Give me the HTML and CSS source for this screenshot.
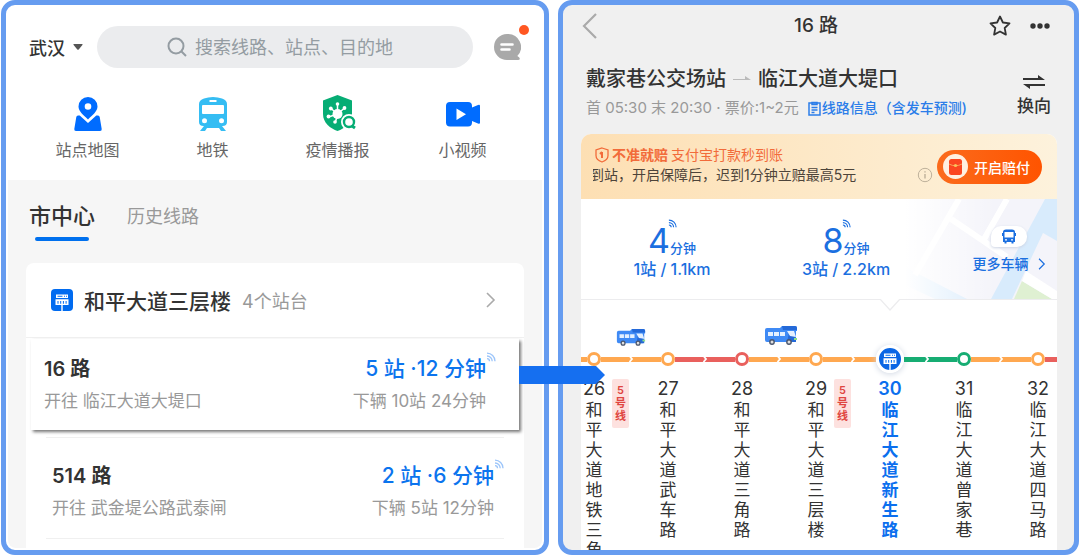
FILE: index.html
```html
<!DOCTYPE html>
<html lang="zh-CN">
  <head>
    <meta charset="UTF-8" />
    <meta name="viewport" content="width=device-width, initial-scale=1.0" />
    <title>16 路</title>
    <link rel="stylesheet" href="styles.css">
  </head>
  <body>
    <svg width="0" height="0" class="defs">
      <symbol id="signal" viewBox="0 0 10 10">
        <g fill="none" stroke="currentColor" stroke-width="1.3">
          <path d="M1 1.2a8 8 0 0 1 8 8M1 4a5.2 5.2 0 0 1 5.2 5.2M1 6.7a2.5 2.5 0 0 1 2.5 2.5" />
        </g>
      </symbol>
      <symbol id="bus" viewBox="0 0 34 20">
        <path fill="#3f8af5" d="M1 5q0-2 2-2h13l2-2h13q2 0 2 2v3h-1v9q0 2-2 2H3q-2 0-2-2z" />
        <path fill="#2469d8" d="M18 1h13q2 0 2 2v2H19zM25 8l7 5v4h-9z" />
        <path fill="#e4f0ff" d="M4 7h5v4H4zM10 7h5v4h-5zM16 7h5v4h-5zM23 6h7l2 6-6-1z" />
        <path fill="#8ee08a" d="M30 13h3v2h-3z" />
        <circle cx="8" cy="17" r="2.2" fill="#ddd" stroke="#4b566c" stroke-width="1.4" />
        <circle cx="25" cy="17" r="2.2" fill="#ddd" stroke="#4b566c" stroke-width="1.4" />
      </symbol>
      <symbol id="sign" viewBox="0 0 22 22">
        <path fill="#fff" d="M5 5.5h12v3.500H5zM4.500 10.200h13V16h-5.800v6h-1.400v-6H4.500z" />
        <path fill="#006bf0" d="M6.500 6.700h5v1h-5zM13 6.700h1v1h-1zM15 6.700h1v1h-1zM6.500 12h1v2.800h-1zM9.200 12h1v2.800h-1zM11.900 12h1v2.800h-1zM14.600 12h1v2.800h-1z" />
      </symbol>
      <symbol id="chevron" viewBox="0 0 10 16">
        <path d="M1 1l7 7-7 7" fill="none" stroke="currentColor" stroke-width="1.6" />
      </symbol>
      <symbol id="next" viewBox="0 0 6 8">
        <path d="M1.5 1L4 4 1.5 7" fill="none" stroke="#fff" stroke-width="1.8" />
      </symbol>
    </svg>

    <main class="screens">
      <!-- home -->
      <section class="screen home">
        <div class="home_top">
          <div class="search_bar">
            <button class="city">武汉
              <svg width="10" height="6" viewBox="0 0 10 6"><path fill="#555" d="M1 0h8q1 0 .4.9L5.700 5.400q-.7.7-1.400 0L.6.900Q0 0 1 0z" /></svg>
            </button>
            <label class="search">
              <svg width="20" height="20" viewBox="0 0 20 20" fill="none" stroke="#949ca2" stroke-width="2"><circle cx="9" cy="9" r="7.5" /><path d="M14 14l5 5" /></svg>
              <input type="text" aria-label="搜索" placeholder="搜索线路、站点、目的地" />
            </label>
            <button class="chat" aria-label="消息">
              <svg width="28" height="28" viewBox="0 0 28 28">
                <path fill="#a9a9a9" d="M14 1a13 13 0 1 0 0 26h11q2 0 1.800-1.500t-2.500-2.500A13 13 0 0 0 14 1z" />
                <path d="M8.500 11.500h11M8.500 16.500h8" stroke="#fff" stroke-width="2.600" stroke-linecap="round" />
              </svg>
              <span class="dot"></span>
            </button>
          </div>
          <nav class="shortcuts">
            <a href="#" class="shortcut">
              <svg width="36" height="38" viewBox="0 0 36 38">
                <path fill="#006cff" d="M18 2a9.500 9.500 0 0 0-9.500 9.500c0 5 5 8.500 9.500 13 4.500-4.500 9.500-8 9.500-13A9.500 9.500 0 0 0 18 2zm0 6.200a3.300 3.300 0 1 1 0 6.600 3.300 3.300 0 0 1 0-6.600z" />
                <path fill="#006cff" d="M8 20.500h1.700L18 28l8.300-7.500H28q1.400 0 1.700 1.500l2 12q.3 2-1.700 2H6q-2 0-1.700-2l2-12q.3-1.500 1.700-1.500z" />
              </svg>
              站点地图
            </a>
            <a href="#" class="shortcut">
              <svg width="36" height="38" viewBox="0 0 36 38">
                <path fill="#35bdf3" fill-rule="evenodd" d="M4 9q0-4 5-5.500Q13 2 18 2t9 1.500Q32 5 32 9v18q0 4-4.500 4H27l4 5h-5l-2-3H12l-2 3H5l4-5h-.5Q4 31 4 27zm4 1q-1 0-1 1v7q0 1 1 1h20q1 0 1-1v-7q0-1-1-1zm6.500-5v2h7V5zM9.500 23.300a2.500 2.500 0 1 0 0 5 2.500 2.500 0 0 0 0-5zm17 0a2.500 2.500 0 1 0 0 5 2.500 2.500 0 0 0 0-5z" />
              </svg>
              地铁
            </a>
            <a href="#" class="shortcut">
              <svg width="36" height="38" viewBox="0 0 36 38">
                <path fill="#06ad74" d="M17.500 0L32 5.500V19c0 9-7.500 14.500-14.500 17C10.500 33.500 3 28 3 19V5.500z" />
                <g stroke="#fff" stroke-width="1.500"><path d="M17.500 19V9M17.500 19l7-6M17.500 19l-7-6M17.500 19l-9 3M17.500 19l-2 8" /></g>
                <g fill="#fff"><circle cx="17.500" cy="19" r="5" /><circle cx="17.500" cy="9" r="1.800" /><circle cx="24.500" cy="13" r="1.900" /><circle cx="10.800" cy="13.500" r="1.900" /><circle cx="8.500" cy="21.500" r="1.900" /><circle cx="15" cy="27" r="1.800" /><circle cx="29" cy="27" r="8" /></g>
                <circle cx="29" cy="27" r="5" fill="#fff" stroke="#06ad74" stroke-width="2.400" />
                <path d="M32 31l3 2" stroke="#06ad74" stroke-width="3" />
              </svg>
              疫情播报
            </a>
            <a href="#" class="shortcut">
              <svg width="36" height="38" viewBox="0 0 36 38">
                <path fill="#006cff" fill-rule="evenodd" d="M5 7h18q4 0 4 4v1.500l6-2.500q2-.8 2 1v16.500q0 2-2 1L27 26v1.500q0 4-4 4H5q-4 0-4-4V11q0-4 4-4zm6.500 6.500v11.500l9.500-5.700z" />
              </svg>
              小视频
            </a>
          </nav>
        </div>

        <div class="home_body">
          <div class="tabs">
            <button class="tab _active">市中心</button>
            <button class="tab">历史线路</button>
          </div>
          <div class="card">
            <a href="#" class="station">
              <svg width="22" height="22" viewBox="0 0 22 22"><rect width="22" height="22" rx="4" fill="#006bf0" /><use href="#sign" /></svg>
              <span class="station_name">和平大道三层楼</span>
              <span class="station_count">4个站台</span>
              <svg class="station_more" width="10" height="16"><use href="#chevron" /></svg>
            </a>
            <a href="#" class="line _picked">
              <span class="line_row">
                <span class="line_name">16 路</span>
                <span class="line_time">5 站 ·12 分钟<svg class="signal" width="10" height="10"><use href="#signal" /></svg></span>
              </span>
              <span class="line_row line_sub">
                <span>开往 临江大道大堤口</span>
                <span>下辆 10站 24分钟</span>
              </span>
              <svg class="arrow" width="86" height="18" viewBox="0 0 86 18"><path fill="#156ff0" d="M0 0h77l9 9-9 9H0z" /></svg>
            </a>
            <a href="#" class="line">
              <span class="line_row">
                <span class="line_name">514 路</span>
                <span class="line_time">2 站 ·6 分钟<svg class="signal" width="10" height="10"><use href="#signal" /></svg></span>
              </span>
              <span class="line_row line_sub">
                <span>开往 武金堤公路武泰闸</span>
                <span>下辆 5站 12分钟</span>
              </span>
            </a>
          </div>
        </div>
      </section>

      <!-- line details -->
      <section class="screen detail">
        <header class="bar">
          <button class="back" aria-label="返回"><svg width="16" height="26" viewBox="0 0 16 26"><path d="M14 1L2 13l12 12" fill="none" stroke="#aaa" stroke-width="2.200" /></svg></button>
          <h1 class="bar_title">16 路</h1>
          <div class="bar_actions">
            <button aria-label="收藏"><svg width="22" height="22" viewBox="0 0 22 22"><path d="M11 1.500l2.900 6 6.600.9-4.800 4.600 1.200 6.600L11 16.500l-5.900 3.100L6.300 13 1.500 8.400l6.600-.9z" fill="none" stroke="#333" stroke-width="1.800" stroke-linejoin="round" /></svg></button>
            <button aria-label="更多"><svg width="20" height="6" viewBox="0 0 20 6" fill="#333"><circle cx="3" cy="3" r="2.700" /><circle cx="10" cy="3" r="2.700" /><circle cx="17" cy="3" r="2.700" /></svg></button>
          </div>
        </header>

        <div class="route">
          <div>
            <h2 class="route_name">戴家巷公交场站
              <svg width="18" height="6" viewBox="0 0 18 6"><path d="M0 4h18l-6-4v3H0z" fill="#bbb" /></svg>
              临江大道大堤口</h2>
            <div class="route_info">
              <span class="route_hours">首 05:30 末 20:30 · 票价:1~2元</span>
              <a href="#" class="route_link">
                <svg width="13" height="15" viewBox="0 0 13 15" fill="none" stroke="#2b7de9" stroke-width="1.500"><path d="M1 2h11v12H1zM3.500 6.500h6M3.500 9h6M3.500 11.500h3" /><path d="M4 1.500h5v2H4z" /></svg>线路信息（含发车预测)
              </a>
            </div>
          </div>
          <button class="swap">
            <svg width="22" height="14" viewBox="0 0 22 14" fill="#333"><path d="M0 3h15V0l7 5H0zM22 11H7v3L0 9h22z" /></svg>
            换向
          </button>
        </div>

        <div class="panel">
          <div class="banner">
            <div class="banner_text">
              <p class="banner_title">
                <svg width="14" height="16" viewBox="0 0 14 16" fill="none" stroke="#f26b3a" stroke-width="1.300"><path d="M7 1l6 2v5.500c0 3.500-3 5.500-6 6.500-3-1-6-3-6-6.500V3z" /><path d="M7 5v6M5 7l2-2" stroke-width="2" /></svg>
                <b>不准就赔</b> <span>支付宝打款秒到账</span>
              </p>
              <p class="banner_note">到站，开启保障后，迟到1分钟立赔最高5元</p>
            </div>
            <svg class="banner_hint" width="16" height="16" viewBox="0 0 16 16" fill="none" stroke="#bdb09a"><circle cx="8" cy="8" r="6.700" /><path d="M8 7v4.500M8 4.200v1.400" stroke-width="1.400" /></svg>
            <button class="pay">
              <svg width="25" height="25" viewBox="0 0 25 25"><circle cx="12.500" cy="12.500" r="12.500" fill="#fff0e0" /><rect x="6" y="5" width="13" height="16" rx="2.500" fill="#fb4620" /><path d="M6 10q6.500 3.500 13 0" fill="none" stroke="#f8a35a" /><circle cx="12.500" cy="11.500" r="1.600" fill="#f8c35a" /></svg>
              开启赔付
            </button>
          </div>

          <div class="arrivals">
            <div class="arrival">
              <div class="arrival_time">4<span>分钟</span><svg class="signal" width="9" height="9"><use href="#signal" /></svg></div>
              <div class="arrival_far">1站 / 1.1km</div>
            </div>
            <div class="arrival">
              <div class="arrival_time">8<span>分钟</span><svg class="signal" width="9" height="9"><use href="#signal" /></svg></div>
              <div class="arrival_far">3站 / 2.2km</div>
            </div>
            <a href="#" class="more">
              <svg class="map" viewBox="0 0 152 100" preserveAspectRatio="none">
                <defs>
                  <linearGradient id="fade"><stop offset="0" stop-color="#fff" /><stop offset=".6" stop-color="#fff" stop-opacity="0" /></linearGradient>
                </defs>
                <path fill="#f4f4fa" d="M0 0h152v100H0z" />
                <path fill="#d8ebfc" d="M0 68l62 32H30L0 86z" />
                <path d="M54 0L10 76M46 20l56 38M102 0L78 42" fill="none" stroke="#fff" stroke-width="6" />
                <path fill="#d8ebfc" d="M140 0h12v42l-14-8-31 66H86z" />
                <path fill="#dff0d2" d="M117 82l30 18h-38z" />
                <path fill="#fff" d="M121 72l31 20v8h-5l-30-18z" />
                <path fill="url(#fade)" d="M0 0h152v100H0z" />
              </svg>
              <span class="more_bubble">
                <svg width="14" height="15" viewBox="0 0 14 15"><path fill="#1b6fe0" fill-rule="evenodd" d="M1 3q0-2.500 3-2.500h6q3 0 3 2.500v10h-1.500v1.500H9.500V13h-5v1.500h-2V13H1zM0 4h1v3H0zM13 4h1v3h-1zM2.500 3v5.500h9V3zM3 10.200v1.200h2v-1.200zm6 0v1.200h2v-1.200z" /></svg>
              </span>
              <span class="more_text">更多车辆 <svg width="8" height="12" viewBox="0 0 10 16"><use href="#chevron" /></svg></span>
            </a>
            <svg class="notch" width="20" height="12" viewBox="0 0 20 12"><path d="M0 0l10 11L20 0" fill="#fff" stroke="#ececee" stroke-width="1.300" /></svg>
          </div>

          <ol class="stops">
            <li class="stop">
              <div class="track"><i class="seg _orange"></i><i class="node _orange"></i><i class="seg _orange"></i><svg class="next" width="6" height="8"><use href="#next" /></svg></div>
              <svg class="bus" width="30" height="18"><use href="#bus" /></svg>
              <div class="stop_num">26</div>
              <div class="stop_name">和平大道地铁三角路</div>
              <span class="tag">5号线</span>
            </li>
            <li class="stop">
              <div class="track"><i class="seg _orange"></i><i class="node _orange"></i><i class="seg _red"></i><svg class="next" width="6" height="8"><use href="#next" /></svg></div>
              <div class="stop_num">27</div>
              <div class="stop_name">和平大道武车路</div>
            </li>
            <li class="stop">
              <div class="track"><i class="seg _red"></i><i class="node _red"></i><i class="seg _orange"></i><svg class="next" width="6" height="8"><use href="#next" /></svg></div>
              <svg class="bus _near" width="34" height="20"><use href="#bus" /></svg>
              <div class="stop_num">28</div>
              <div class="stop_name">和平大道三角路</div>
            </li>
            <li class="stop">
              <div class="track"><i class="seg _orange"></i><i class="node _orange"></i><i class="seg _orange"></i><svg class="next" width="6" height="8"><use href="#next" /></svg></div>
              <div class="stop_num">29</div>
              <div class="stop_name">和平大道三层楼</div>
              <span class="tag">5号线</span>
            </li>
            <li class="stop _current">
              <div class="track"><i class="seg _orange"></i><svg class="here" width="28" height="28" viewBox="0 0 28 28"><circle cx="14" cy="14" r="12.500" fill="#0b66e4" stroke="#fff" stroke-width="3" /><use href="#sign" x="3" y="3" width="22" height="22" /></svg><i class="seg _green"></i><svg class="next" width="6" height="8"><use href="#next" /></svg></div>
              <div class="stop_num">30</div>
              <div class="stop_name">临江大道新生路</div>
            </li>
            <li class="stop">
              <div class="track"><i class="seg _green"></i><i class="node _green"></i><i class="seg _orange"></i><svg class="next" width="6" height="8"><use href="#next" /></svg></div>
              <div class="stop_num">31</div>
              <div class="stop_name">临江大道曾家巷</div>
            </li>
            <li class="stop">
              <div class="track"><i class="seg _orange"></i><i class="node _orange"></i><i class="seg _red"></i></div>
              <div class="stop_num">32</div>
              <div class="stop_name">临江大道四马路</div>
            </li>
          </ol>
        </div>
      </section>
    </main>
  </body>
</html>
```

FILE: styles.css
```css
* {
  box-sizing: border-box;
}
body {
  margin: 0;
  background-color: #fff;
  color: #333;
  font-family: Inter, "Noto Sans CJK SC", sans-serif;
}
h1,
h2,
p,
ol {
  margin: 0;
  padding: 0;
}
a {
  color: inherit;
  text-decoration: none;
}
button {
  padding: 0;
  border: 0;
  background: none;
  color: inherit;
  font: inherit;
}
svg {
  display: block;
  flex: none;
}
.defs {
  position: absolute;
}

.screens {
  display: grid;
  grid-template-columns: 548fr 521fr;
  gap: 9px;
  height: 100vh;
  padding: 0 1px 1px;
}
.screen {
  display: flex;
  flex-direction: column;
  min-width: 0;
  min-height: 0;
  border: 5px solid #669cf0;
  border-radius: 14px;
}

/* home */
.home {
  position: relative;
  z-index: 1;
  padding: 2px;
  background-color: #fff;
}
.home_top {
  height: 173px;
  padding: 19px 17px 0;
}
.search_bar {
  display: flex;
  align-items: center;
  padding: 0 4px;
}
.city {
  display: flex;
  flex: none;
  align-items: center;
  gap: 8px;
  width: 68px;
  font-size: 18px;
  font-weight: 500;
}
.search {
  display: flex;
  flex: 1;
  align-items: center;
  gap: 8px;
  min-width: 0;
  height: 42px;
  padding-left: 70px;
  border-radius: 21px;
  background-color: #ebecee;
}
.search input {
  flex: 1;
  min-width: 0;
  padding: 0;
  border: 0;
  outline: 0;
  background: none;
  font: inherit;
  font-size: 18px;
}
.search input::placeholder {
  color: #949ca2;
}
.chat {
  position: relative;
  margin: 0 0 0 20px;
}
.dot {
  position: absolute;
  top: -8px;
  right: -8px;
  width: 10px;
  height: 10px;
  border-radius: 50%;
  background-color: #ff5722;
}
.shortcuts {
  display: grid;
  grid-template-columns: repeat(4, 1fr);
  margin-top: 27px;
}
.shortcut {
  display: flex;
  flex-direction: column;
  align-items: center;
  gap: 5px;
  color: #666;
  font-size: 16px;
  line-height: 24px;
}
.home_body {
  display: flex;
  flex: 1;
  flex-direction: column;
  padding: 20px 18px 0;
  border-radius: 0 0 8px 8px;
  background-color: #f6f6f6;
}
.tabs {
  display: flex;
  gap: 32px;
  padding-left: 3px;
}
.tab {
  align-self: flex-start;
  color: #999;
  font-size: 18px;
  line-height: 34px;
}
.tab._active {
  color: #333;
  font-size: 22px;
  font-weight: 500;
  line-height: 32px;
}
.tab._active::after {
  content: "";
  display: block;
  height: 4px;
  margin: 5px 6px 0;
  border-radius: 2px;
  background-color: #0070ee;
}
.card {
  flex: 1;
  margin-top: 22px;
  border-radius: 8px 8px 0 0;
  background-color: #fff;
}
.station {
  display: flex;
  align-items: center;
  gap: 11px;
  height: 75px;
  padding: 0 28px 0 25px;
  border-bottom: 1px solid #f0f0f0;
}
.station_name {
  font-size: 21px;
  font-weight: 500;
}
.station_count {
  color: #999;
  font-size: 18px;
}
.station_more {
  margin-left: auto;
  color: #aaa;
}
.line {
  position: relative;
  display: block;
  margin: 0 20px;
  padding: 20px 10px 16px 6px;
  border-top: 1px solid #f0f0f0;
  border-bottom: 1px solid #f0f0f0;
}
.line._picked {
  margin: 1px 5px 7px 5px;
  padding: 12px 33px 15px 13px;
  border: 0;
  background-color: #fff;
  box-shadow: 2px 2px 3px #777;
}
.line_row {
  display: flex;
  align-items: center;
  justify-content: space-between;
  line-height: 36px;
}
.line_name {
  font-size: 20px;
  font-weight: 600;
}
.line_time {
  position: relative;
  color: #0b74ee;
  font-size: 21px;
  font-weight: 500;
}
.line_time .signal {
  position: absolute;
  top: 1px;
  right: -10px;
  color: #9cc5fa;
}
.line_sub {
  color: #999;
  font-size: 17px;
  line-height: 28px;
}
.arrow {
  position: absolute;
  top: 27px;
  left: 100%;
}

/* line details */
.detail {
  overflow: hidden;
  background-color: #f0f0f0;
}
.bar {
  display: grid;
  grid-template-columns: 1fr auto 1fr;
  align-items: center;
  height: 42px;
  padding: 0 24px 0 19px;
}
.bar_title {
  font-size: 19px;
  font-weight: 500;
  line-height: 26px;
}
.bar_actions {
  display: flex;
  align-items: center;
  justify-content: flex-end;
  gap: 19px;
}
.route {
  display: flex;
  align-items: flex-start;
  justify-content: space-between;
  height: 87px;
  padding: 17px 23px 0;
}
.route_name {
  display: flex;
  align-items: center;
  gap: 7px;
  font-size: 20px;
  font-weight: 500;
  line-height: 30px;
}
.route_info {
  display: flex;
  gap: 9px;
  font-size: 14px;
  line-height: 28px;
}
.route_hours {
  color: #999;
  font-size: 15px;
}
.route_link {
  display: flex;
  align-items: center;
  gap: 1px;
  color: #2b7de9;
  font-weight: 500;
}
.swap {
  display: flex;
  flex-direction: column;
  align-items: center;
  gap: 5px;
  padding-top: 11px;
  font-size: 17px;
  font-weight: 500;
  line-height: 24px;
}
.panel {
  flex: 1;
  margin: 0 17px 0 18px;
  border-radius: 10px 10px 0 0;
  overflow: hidden;
  background-color: #fff;
}
.banner {
  display: flex;
  align-items: center;
  height: 65px;
  padding: 0 15px 0 12px;
  background: linear-gradient(90deg, #fddfb3, #fdf2dc);
}
.banner_text {
  flex: 1;
  padding-bottom: 4px;
  overflow: hidden;
  white-space: nowrap;
  font-size: 14px;
  line-height: 20px;
}
.banner_title {
  display: flex;
  align-items: center;
  gap: 3px;
  padding-left: 2px;
  color: #f26b3a;
}
.banner_note {
  text-indent: -3px;
  color: #4d443a;
}
.banner_hint {
  align-self: flex-end;
  margin: 0 4px 16px 0;
}
.pay {
  display: flex;
  align-items: center;
  gap: 6px;
  height: 34px;
  padding: 0 12px 0 6px;
  border-radius: 17px;
  background: linear-gradient(90deg, #fb6b1c, #ff5400);
  color: #fff;
  font-size: 14px;
  font-weight: 500;
}
.arrivals {
  position: relative;
  display: grid;
  grid-template-columns: 174fr 174fr 124fr;
  height: 101px;
  padding-left: 4px;
  border-bottom: 1px solid #ececee;
  color: #1b6fe0;
}
.arrival {
  display: flex;
  flex-direction: column;
  align-items: center;
  padding-top: 22px;
}
.arrival_time {
  position: relative;
  height: 39px;
  font-size: 34px;
  line-height: 40px;
}
.arrival_time span {
  font-size: 13px;
  font-weight: 500;
}
.arrival_time .signal {
  position: absolute;
  top: -2px;
  left: 20px;
}
.arrival_far {
  font-size: 16px;
  font-weight: 500;
  line-height: 18px;
}
.more {
  position: relative;
  display: flex;
  flex-direction: column;
  align-items: center;
  padding: 27px 0 0 28px;
  font-size: 14px;
  font-weight: 500;
}
.map {
  position: absolute;
  top: 0;
  right: 0;
  width: 152px;
  height: 100%;
}
.more_bubble {
  position: relative;
  display: flex;
  align-items: center;
  justify-content: center;
  width: 36px;
  height: 21px;
  border-radius: 10px 10px 10px 4px;
  background-color: #fff;
  box-shadow: 0 1px 3px #ccd4e4;
}
.more_text {
  position: relative;
  display: flex;
  align-items: center;
  gap: 9px;
  margin-top: 7px;
  line-height: 20px;
}
.notch {
  position: absolute;
  bottom: -12px;
  left: 65%;
  margin-left: -10px;
}

.stops {
  display: grid;
  grid-template-columns: repeat(7, 1fr);
  margin: 0 -18px 0 -24px;
  padding-top: 45px;
  list-style: none;
}
.stop {
  position: relative;
  text-align: center;
}
.track {
  position: relative;
  display: flex;
  align-items: center;
  height: 28px;
}
.seg {
  flex: 1;
  height: 5px;
}
.seg._orange {
  background-color: #ffa850;
}
.seg._red {
  background-color: #e9605d;
}
.seg._green {
  background-color: #17ad73;
}
.node {
  width: 14px;
  height: 14px;
  border: 3px solid;
  border-radius: 50%;
  background-color: #fff;
}
.node._orange {
  border-color: #ffa850;
}
.node._red {
  border-color: #e9605d;
}
.node._green {
  border-color: #17ad73;
}
.here {
  border-radius: 50%;
  box-shadow: 0 1px 6px #cfd6e2;
}
.next {
  position: absolute;
  right: -3px;
  z-index: 1;
}
.bus {
  position: absolute;
  top: -17px;
  left: 100%;
  margin-left: -15px;
}
.bus._near {
  top: -20px;
}
.stop_num {
  margin-top: 5px;
  font-size: 18px;
  line-height: 22px;
}
.stop_name {
  width: 17px;
  margin: 0 auto;
  font-size: 17px;
  line-height: 20px;
  word-break: break-all;
}
.stop._current {
  color: #0b6fee;
  font-weight: 600;
}
.tag {
  position: absolute;
  top: 34px;
  left: 50%;
  width: 17px;
  margin-left: 18px;
  padding: 5px 3px;
  border-radius: 2px;
  background-color: #fde1df;
  color: #e04540;
  font-size: 11px;
  font-weight: 600;
  line-height: 13px;
  word-break: break-all;
}
```
